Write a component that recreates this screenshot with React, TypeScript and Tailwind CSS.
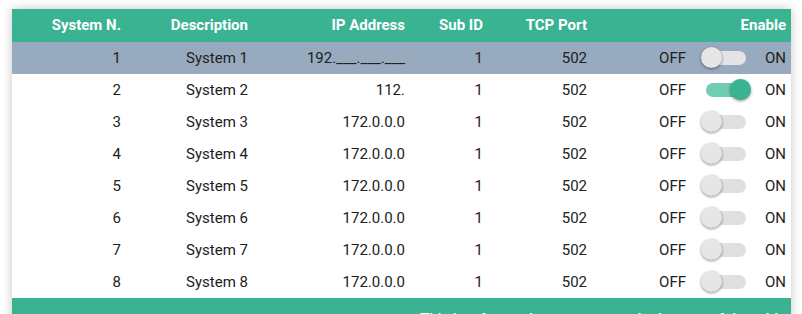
import { useState } from "react";

type Row = {
    id: number;
    description: string;
    ip: string;
    subId: number;
    port: number;
    enabled: boolean;
};

const ROWS: Row[] = [
    { id: 1, description: "System 1", ip: "192.___.___.___", subId: 1, port: 502, enabled: false },
    { id: 2, description: "System 2", ip: "112.", subId: 1, port: 502, enabled: true },
    { id: 3, description: "System 3", ip: "172.0.0.0", subId: 1, port: 502, enabled: false },
    { id: 4, description: "System 4", ip: "172.0.0.0", subId: 1, port: 502, enabled: false },
    { id: 5, description: "System 5", ip: "172.0.0.0", subId: 1, port: 502, enabled: false },
    { id: 6, description: "System 6", ip: "172.0.0.0", subId: 1, port: 502, enabled: false },
    { id: 7, description: "System 7", ip: "172.0.0.0", subId: 1, port: 502, enabled: false },
    { id: 8, description: "System 8", ip: "172.0.0.0", subId: 1, port: 502, enabled: false },
];

const COLS = "grid grid-cols-[109px_127px_157px_78px_104px_199px]";

function Toggle({ on, onClick, dim }: { on: boolean; onClick: () => void; dim?: boolean }) {
    return (
        <button onClick={onClick} className="relative ml-[6px] h-[32px] w-[58px] shrink-0">
            <span
                className={`absolute left-[14px] top-[9px] h-[14px] w-[40px] rounded-full ${
                    on ? "bg-[#6fcdb2]" : dim ? "bg-[#e2e4e7]" : "bg-[#e0e0e0]"
                }`}
            />
            <span
                className={`absolute top-[5px] h-[21px] w-[21px] rounded-full shadow-[0_1px_3px_rgba(0,0,0,0.45)] ${
                    on ? "left-[38px] bg-[#3ab393]" : "left-[9px] bg-[#e6e6e6]"
                }`}
            />
        </button>
    );
}

export default function App() {
    const [rows, setRows] = useState(ROWS);
    const [selected] = useState(1);

    const toggle = (id: number) =>
        setRows((rs) => rs.map((r) => (r.id === id ? { ...r, enabled: !r.enabled } : r)));

    return (
        <div className="h-[314px] w-[802px] overflow-hidden bg-white pl-[12px] pt-[9px] font-['Roboto',sans-serif] text-[15px]">
            <div className="w-[779px] bg-white pr-[5px] shadow-[0_0_10px_rgba(0,0,0,0.22)]">
                {/* Header */}
                <div className={`${COLS} h-[33px] items-center bg-[#3ab393] font-bold text-white -mr-[5px] pr-[5px]`}>
                    <div className="text-right">System N.</div>
                    <div className="text-right">Description</div>
                    <div className="text-right">IP Address</div>
                    <div className="text-right">Sub ID</div>
                    <div className="text-right">TCP Port</div>
                    <div className="text-right">Enable</div>
                </div>

                {/* Rows */}
                {rows.map((r) => (
                    <div
                        key={r.id}
                        className={`${COLS} h-[32px] items-center text-[#212121] -mr-[5px] pr-[5px] ${
                            r.id === selected ? "bg-[#97aabe]" : "bg-white"
                        }`}
                    >
                        <div className="text-right">{r.id}</div>
                        <div className="text-right">{r.description}</div>
                        <div className="text-right">{r.ip}</div>
                        <div className="text-right">{r.subId}</div>
                        <div className="text-right">{r.port}</div>
                        <div className="flex items-center justify-end">
                            <span>OFF</span>
                            <Toggle on={r.enabled} dim={r.id === selected} onClick={() => toggle(r.id)} />
                            <span className="ml-[15px]">ON</span>
                        </div>
                    </div>
                ))}

                {/* Footer */}
                <div className="-mr-[5px] h-[44px] bg-[#3ab393] pr-[5px] pt-[10px] text-right font-medium text-white">
                    This is a footer that appears on the bottom of the table
                </div>
            </div>
        </div>
    );
}
